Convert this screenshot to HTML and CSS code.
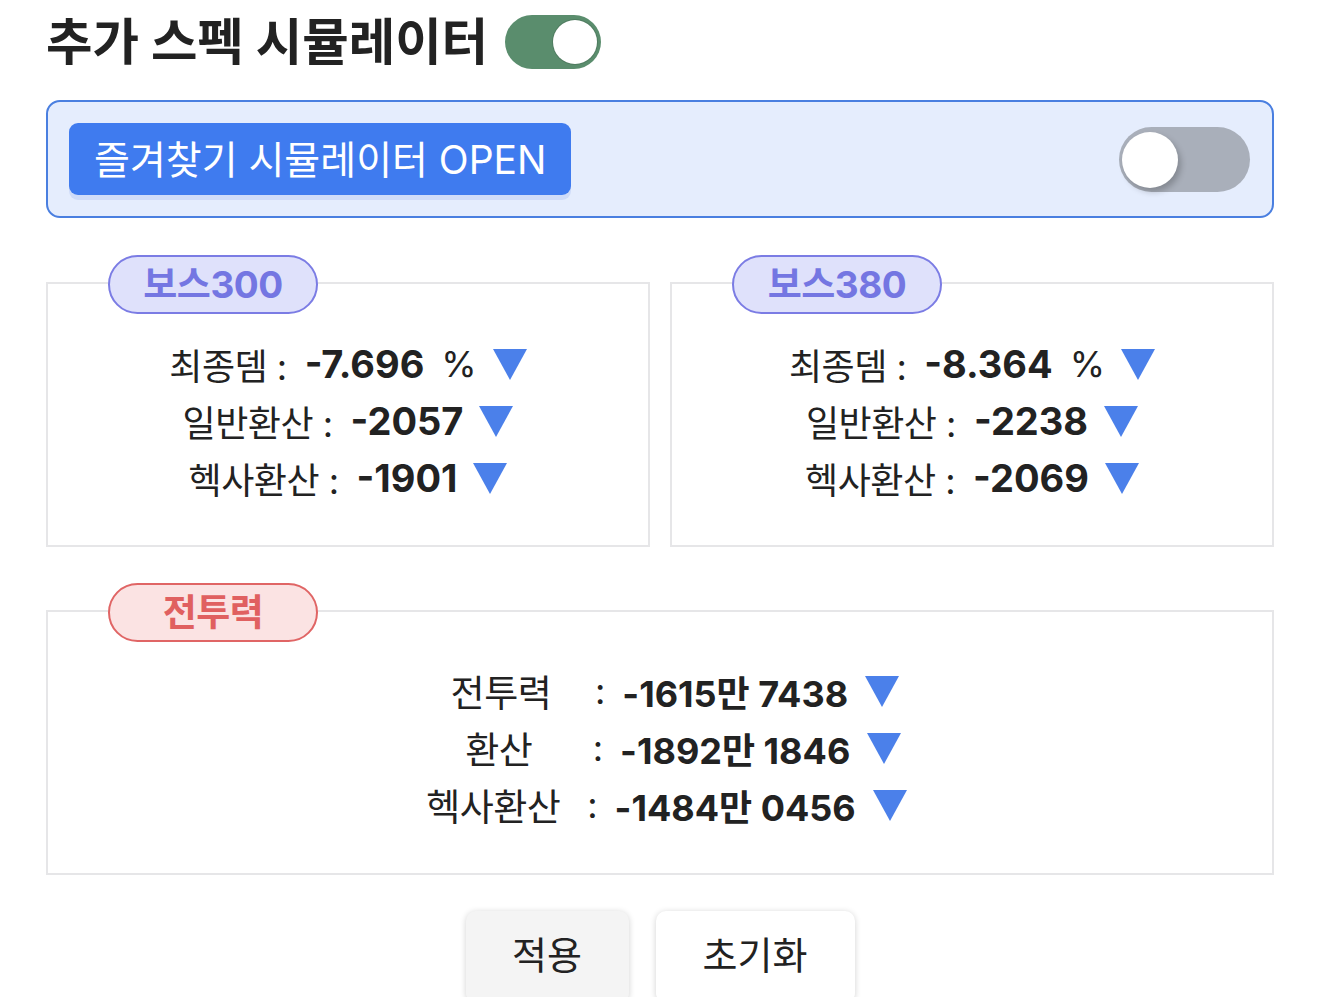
FILE: index.html
```html
<!DOCTYPE html>
<html lang="ko">
<head>
<meta charset="utf-8">
<title>추가 스펙 시뮬레이터</title>
<link rel="stylesheet" href="styles.css">
</head>
<body>
<div class="page">
  <div class="title-row">
    <h1 class="title">추가 스펙 시뮬레이터</h1>
    <div class="toggle toggle-on"><span class="knob"></span></div>
  </div>

  <div class="fav-panel">
    <button class="fav-btn">즐겨찾기 시뮬레이터 OPEN</button>
    <div class="toggle-off"><span class="knob-off"></span></div>
  </div>

  <div class="boss-grid">
    <section class="box">
      <div class="pill pill-boss">보스300</div>
      <div class="rows">
        <div class="row"><span class="lbl">최종뎀 :</span><span class="val">-7.696</span><span class="unit">%</span><svg class="tri" viewBox="0 0 34 31"><polygon points="0,0 34,0 17,31" fill="#4b80ea"/></svg></div>
        <div class="row"><span class="lbl">일반환산 :</span><span class="val">-2057</span><svg class="tri" viewBox="0 0 34 31"><polygon points="0,0 34,0 17,31" fill="#4b80ea"/></svg></div>
        <div class="row"><span class="lbl">헥사환산 :</span><span class="val">-1901</span><svg class="tri" viewBox="0 0 34 31"><polygon points="0,0 34,0 17,31" fill="#4b80ea"/></svg></div>
      </div>
    </section>
    <section class="box">
      <div class="pill pill-boss">보스380</div>
      <div class="rows">
        <div class="row"><span class="lbl">최종뎀 :</span><span class="val">-8.364</span><span class="unit">%</span><svg class="tri" viewBox="0 0 34 31"><polygon points="0,0 34,0 17,31" fill="#4b80ea"/></svg></div>
        <div class="row"><span class="lbl">일반환산 :</span><span class="val">-2238</span><svg class="tri" viewBox="0 0 34 31"><polygon points="0,0 34,0 17,31" fill="#4b80ea"/></svg></div>
        <div class="row"><span class="lbl">헥사환산 :</span><span class="val">-2069</span><svg class="tri" viewBox="0 0 34 31"><polygon points="0,0 34,0 17,31" fill="#4b80ea"/></svg></div>
      </div>
    </section>
  </div>

  <section class="box box-wide">
    <div class="pill pill-power">전투력</div>
    <div class="rows rows-power">
      <div class="row"><span class="plbl">전투력</span><span class="colon">:</span><span class="val">-1615만 7438</span><svg class="tri" viewBox="0 0 34 31"><polygon points="0,0 34,0 17,31" fill="#4b80ea"/></svg></div>
      <div class="row"><span class="plbl">환산</span><span class="colon">:</span><span class="val">-1892만 1846</span><svg class="tri" viewBox="0 0 34 31"><polygon points="0,0 34,0 17,31" fill="#4b80ea"/></svg></div>
      <div class="row"><span class="plbl">헥사환산</span><span class="colon">:</span><span class="val">-1484만 0456</span><svg class="tri" viewBox="0 0 34 31"><polygon points="0,0 34,0 17,31" fill="#4b80ea"/></svg></div>
    </div>
  </section>

  <div class="actions">
    <button class="act act-apply">적용</button>
    <button class="act act-reset">초기화</button>
  </div>
</div>
</body>
</html>
```

FILE: styles.css
```css
* { box-sizing: border-box; }
html, body { margin: 0; padding: 0; background: #ffffff; overflow: hidden; }
body {
  font-family: "Inter", "Noto Sans CJK KR", "Noto Sans", sans-serif;
  color: #222222;
}
.page {
  width: 1320px;
  height: 997px;
  padding: 15px 46px 0 46px;
}

.title-row {
  display: flex;
  align-items: center;
  gap: 17px;
  height: 54px;
}
.title {
  margin: 0;
  font-size: 50.5px;
  font-weight: 700;
  line-height: 54px;
  color: #222;
}
.toggle {
  position: relative;
  width: 96px;
  height: 54px;
  border-radius: 27px;
  background: #5a8d6d;
}
.toggle .knob {
  position: absolute;
  right: 4px;
  top: 5px;
  width: 44px;
  height: 44px;
  border-radius: 50%;
  background: #fff;
  box-shadow: 0 0 0 1px rgba(0,0,0,0.12);
}

.fav-panel {
  margin-top: 31px;
  height: 118px;
  border: 2px solid #4a7fe0;
  border-radius: 14px;
  background: #e5edfd;
  padding: 21px 22px 21px 21px;
  display: flex;
  align-items: center;
  justify-content: space-between;
}
.fav-btn {
  height: 72px;
  padding: 0 25px 4px 25px;
  border: none;
  border-radius: 9px;
  background: #3f7bef;
  color: #ffffff;
  font-family: "Inter", "Noto Sans CJK KR", sans-serif;
  font-size: 39px;
  font-weight: 400;
  box-shadow: 0 5px 0 #cfdcf9;
  align-self: flex-start;
}
.toggle-off {
  position: relative;
  width: 131px;
  height: 65px;
  border-radius: 33px;
  background: #a9afba;
}
.knob-off {
  position: absolute;
  left: 3px;
  top: 5px;
  width: 56px;
  height: 56px;
  border-radius: 50%;
  background: #fff;
  box-shadow: 3px 4px 6px rgba(0,0,0,0.22);
}

.boss-grid {
  margin-top: 64px;
  display: grid;
  grid-template-columns: 1fr 1fr;
  gap: 20px;
}
.box {
  position: relative;
  height: 265px;
  border: 2px solid #e6e6e8;
  background: #fff;
}
.pill {
  position: absolute;
  top: -29px;
  left: 60px;
  width: 210px;
  height: 59px;
  padding-bottom: 5px;
  border-radius: 30px;
  border: 2px solid;
  display: flex;
  align-items: center;
  justify-content: center;
  font-size: 37px;
  font-weight: 700;
  letter-spacing: -0.5px;
}
.pill-boss {
  background: #dfe1fb;
  border-color: #7b7ce4;
  color: #7476e2;
}
.pill-power {
  background: #fbe3e3;
  border-color: #e06565;
  color: #e06060;
}

.rows {
  padding-top: 51px;
  display: flex;
  flex-direction: column;
}
.row {
  height: 57px;
  display: flex;
  align-items: center;
  justify-content: center;
  font-size: 36px;
  white-space: nowrap;
}
.lbl {
  font-weight: 400;
  color: #222;
  letter-spacing: -0.5px;
}
.val {
  margin-left: 18px;
  font-size: 38px;
  font-weight: 700;
  color: #222;
}
.unit {
  margin-left: 17px;
  font-weight: 400;
}
.tri {
  width: 34px;
  height: 31px;
  margin-left: 16px;
  margin-top: 2px;
  flex: none;
}

.box-wide {
  margin-top: 63px;
}
.rows-power {
  padding-top: 50px;
}
.plbl {
  display: inline-block;
  width: 150px;
  padding-left: 10px;
  text-align: center;
  font-size: 37px;
  letter-spacing: -0.5px;
}
.colon {
  margin-left: 24px;
}
.rows-power .val {
  margin-left: 17px;
  font-size: 36px;
}
.rows-power .tri {
  margin-left: 17px;
}

.actions {
  margin-top: 36px;
  display: flex;
  justify-content: center;
  gap: 27px;
}
.act {
  height: 92px;
  padding: 0;
  border: none;
  border-radius: 10px;
  font-family: "Inter", "Noto Sans CJK KR", sans-serif;
  font-size: 38px;
  font-weight: 400;
  color: #222;
  box-shadow: 0 1px 6px rgba(0,0,0,0.18);
  display: flex;
  justify-content: center;
  padding-top: 14px;
}
.act-apply { width: 163px; background: #f4f4f4; }
.act-reset { width: 199px; background: #ffffff; }
```
